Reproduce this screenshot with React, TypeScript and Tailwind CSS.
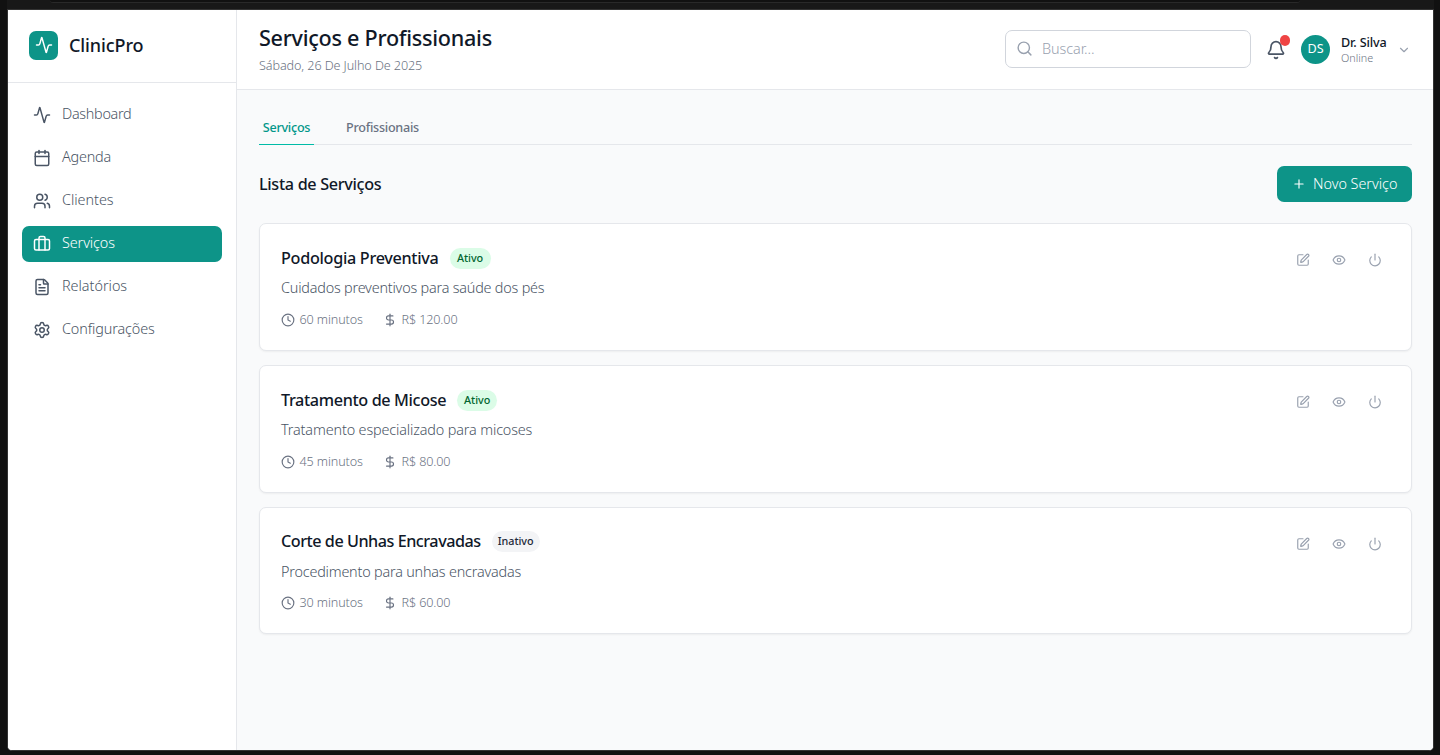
import type { ReactNode } from 'react';
import {
  Activity,
  Bell,
  Calendar,
  ChevronDown,
  Clock,
  DollarSign,
  Eye,
  FileText,
  Plus,
  Power,
  Search,
  Settings,
  SquarePen,
  Users,
} from 'lucide-react';

function BriefcaseIcon() {
  return (
    <svg width="18" height="18" viewBox="0 0 24 24" fill="none" stroke="currentColor" strokeWidth="2" strokeLinecap="round" strokeLinejoin="round">
      <rect x="2" y="6" width="20" height="14" rx="2" />
      <path d="M16 20V4a2 2 0 0 0-2-2h-4a2 2 0 0 0-2 2v16" />
    </svg>
  );
}

type NavItem = { label: string; icon: ReactNode; tracking: string; active?: boolean };

const navItems: NavItem[] = [
  { label: 'Dashboard', icon: <Activity size={18} />, tracking: 'tracking-[-0.3px]' },
  { label: 'Agenda', icon: <Calendar size={18} />, tracking: 'tracking-[-0.2px]' },
  { label: 'Clientes', icon: <Users size={18} />, tracking: 'tracking-[-0.03px]' },
  { label: 'Serviços', icon: <BriefcaseIcon />, tracking: 'tracking-[-0.1px]', active: true },
  { label: 'Relatórios', icon: <FileText size={18} />, tracking: 'tracking-[-0.02px]' },
  { label: 'Configurações', icon: <Settings size={18} />, tracking: 'tracking-[-0.12px]' },
];

const services = [
  {
    name: 'Podologia Preventiva',
    nameTracking: 'tracking-[-0.3px]',
    active: true,
    badge: 'w-[41px]',
    description: 'Cuidados preventivos para saúde dos pés',
    descTracking: 'tracking-[-0.2px]',
    duration: '60 minutos',
    price: 'R$ 120.00',
    box: 'h-32 pt-[23px]',
    metaGap: 'mt-3',
  },
  {
    name: 'Tratamento de Micose',
    nameTracking: 'tracking-[-0.36px]',
    active: true,
    badge: 'w-10',
    description: 'Tratamento especializado para micoses',
    descTracking: 'tracking-[-0.14px]',
    duration: '45 minutos',
    price: 'R$ 80.00',
    box: 'h-32 pt-[23px]',
    metaGap: 'mt-3',
  },
  {
    name: 'Corte de Unhas Encravadas',
    nameTracking: 'tracking-[-0.48px]',
    active: false,
    badge: 'w-12',
    description: 'Procedimento para unhas encravadas',
    descTracking: 'tracking-[-0.2px]',
    duration: '30 minutos',
    price: 'R$ 60.00',
    box: 'h-[127px] pt-[23px]',
    metaGap: 'mt-[11px]',
  },
];

function Sidebar() {
  return (
    <aside className="flex w-[229px] shrink-0 flex-col border-r border-gray-200 bg-white">
      <div className="flex h-[73px] items-center border-b border-gray-200 pb-0.5 pl-[21px]">
        <div className="flex size-[29px] items-center justify-center rounded-[7px] bg-[#0d9488] text-white">
          <Activity size={18} />
        </div>
        <span className="ml-[11px] text-[18px] leading-6 font-medium tracking-[-0.1px] text-gray-900">ClinicPro</span>
      </div>
      <nav className="flex flex-col gap-[7px] px-[14px] pt-[14px]">
        {navItems.map((item) => (
          <a
            key={item.label}
            className={`flex h-9 items-center rounded-[7px] pl-[11px] ${item.active ? 'bg-[#0d9488] text-white' : 'text-gray-600'}`}
          >
            {item.icon}
            <span className={`ml-[11px] pb-0.5 text-[14.4px] leading-5 font-light ${item.tracking}`}>{item.label}</span>
          </a>
        ))}
      </nav>
    </aside>
  );
}

function Header() {
  return (
    <header className="flex h-20 items-center border-b border-gray-200 bg-white pr-[22px] pl-[22px]">
      <div className="flex flex-col pb-px">
        <h1 className="text-[21.6px] leading-[29px] font-medium tracking-[-0.27px] text-gray-900">Serviços e Profissionais</h1>
        <p className="mt-[5px] text-[12.6px] leading-[18px] font-light tracking-[-0.09px] text-gray-500">Sábado, 26 De Julho De 2025</p>
      </div>
      <div className="ml-auto flex h-[38px] w-[246px] -translate-y-px items-center rounded-[7px] border border-gray-300 pl-[10px] text-gray-400">
        <Search size={17} />
        <span className="ml-[9px] text-[14.4px] leading-5 font-light tracking-[-0.05px]">Buscar...</span>
      </div>
      <div className="relative ml-[15px] text-gray-600">
        <Bell size={20} />
        <span className="absolute -top-[5px] left-[14px] h-[11px] w-[10px] rounded-full bg-[#ef4444]" />
      </div>
      <div className="ml-[15px] flex size-[29px] items-center justify-center rounded-full bg-[#0d9488] text-[12.6px] text-white">DS</div>
      <div className="ml-[11px] flex w-[46px] flex-col whitespace-nowrap">
        <span className="text-[12.6px] leading-4 font-medium tracking-[-0.12px] text-gray-900">Dr. Silva</span>
        <span className="text-[10.8px] leading-[14px] font-light text-gray-500">Online</span>
      </div>
      <ChevronDown size={14} className="ml-[10px] text-gray-400" />
    </header>
  );
}

function ServiceCard({ service }: { service: (typeof services)[number] }) {
  return (
    <article className={`flex justify-between rounded-[7px] border border-gray-200 bg-white pr-[29px] pl-[21px] shadow-[0_1px_2px_rgba(0,0,0,0.05)] ${service.box}`}>
      <div className="flex flex-col items-start whitespace-nowrap">
        <div className={`flex h-[23px] items-center ${service.active ? '' : 'pb-0.5'}`}>
          <h3 className={`text-[16.2px] leading-[23px] font-medium text-gray-900 ${service.nameTracking}`}>{service.name}</h3>
          <span
            className={`ml-[11px] flex h-[21px] items-center justify-center rounded-full text-[10.8px] font-medium tracking-[-0.05px] ${service.badge} ${service.active ? 'bg-green-100 text-green-800' : 'bg-gray-100 text-gray-800'}`}
          >
            {service.active ? 'Ativo' : 'Inativo'}
          </span>
        </div>
        <p className={`mt-[7px] text-[14.4px] leading-[22px] font-light text-gray-600 ${service.descTracking}`}>{service.description}</p>
        <div className={`flex h-[18px] items-center text-[12.6px] font-light tracking-[-0.12px] text-gray-500 ${service.metaGap}`}>
          <Clock size={14} />
          <span className="ml-[4.5px] w-[83.5px]">{service.duration}</span>
          <DollarSign size={14} />
          <span className="ml-[4.5px]">{service.price}</span>
        </div>
      </div>
      <div className="flex h-[26px] items-center gap-[22px] text-gray-400">
        <SquarePen size={14} />
        <Eye size={14} />
        <Power size={14} />
      </div>
    </article>
  );
}

export default function App() {
  return (
    <div className="flex h-[755px] w-[1440px] flex-col overflow-hidden bg-[#111111] pr-[6px] pl-[7px] font-['Noto_Sans',sans-serif]">
      <div className="h-[10px] shrink-0 border-b border-[#333333] bg-[#181818] pr-[134px] pl-[43px]">
        <div className="h-[3px] rounded-b-[8px] border-b border-[#292929] bg-[#111111]" />
      </div>
      <div className="flex h-[741px] overflow-hidden rounded-b-[5px] border-x border-b border-[#333333] bg-white">
        <Sidebar />
        <div className="flex min-w-0 flex-1 flex-col bg-gray-50">
          <Header />
          <main className="flex flex-col pt-[22px] pr-[21px] pl-[22px]">
            <div className="flex h-[33px] gap-[29px] border-b border-gray-200 text-[12.6px] leading-[18px] font-medium tracking-[-0.26px]">
              <button className="flex h-[33px] w-[55px] justify-center border-b border-teal-500 pt-[7px] text-teal-600">Serviços</button>
              <button className="flex px-[3px] pt-[7px] text-gray-500">Profissionais</button>
            </div>
            <div className="mt-[21px] flex h-9 items-center justify-between">
              <h2 className="text-[16.2px] leading-6 font-medium tracking-[-0.32px] text-gray-900">Lista de Serviços</h2>
              <button className="flex h-9 w-[135px] items-center rounded-[7px] bg-[#0d9488] pl-[15px] whitespace-nowrap text-white">
                <Plus size={14} />
                <span className="ml-[7px] text-[14.4px] leading-5 font-light tracking-[-0.02px]">Novo Serviço</span>
              </button>
            </div>
            <div className="mt-[21px] flex flex-col gap-[14px]">
              {services.map((service) => (
                <ServiceCard key={service.name} service={service} />
              ))}
            </div>
          </main>
        </div>
      </div>
    </div>
  );
}
